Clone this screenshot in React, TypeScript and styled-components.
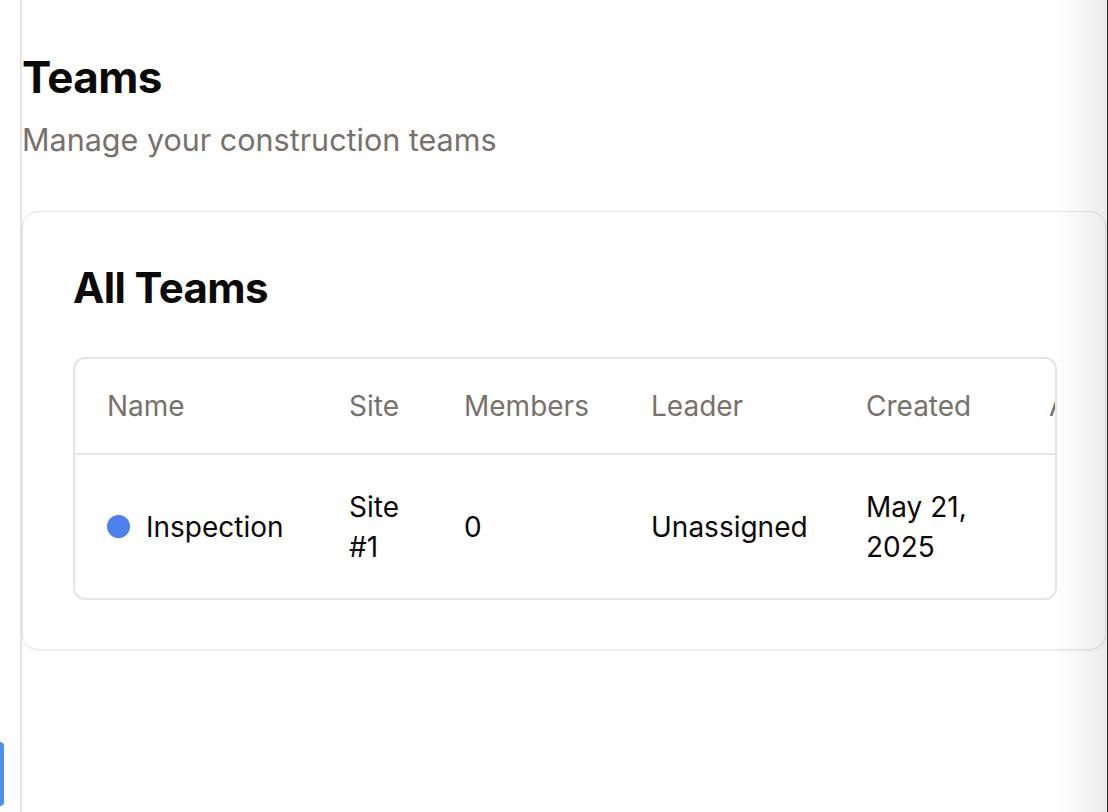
import styled, { createGlobalStyle } from "styled-components";

const GlobalStyle = createGlobalStyle`
  html, body {
    margin: 0;
    padding: 0;
    background: #ffffff;
  }
  body {
    font-family: Inter, "Noto Sans", "Liberation Sans", sans-serif;
    color: #0c0a09;
    overflow: hidden;
  }
  * {
    box-sizing: border-box;
  }
`;

const colours = {
  text: "#0c0a09",
  muted: "#78716c",
  border: "#e5e5e5",
  blue: "#4e80ee",
  tab: "#4a90ec"
};

const Page = styled.div`
  display: flex;
  width: 1108px;
  height: 812px;
  position: relative;
`;

const Sidebar = styled.aside`
  width: 22px;
  flex-shrink: 0;
  border-right: 2px solid ${colours.border};
  display: flex;
  flex-direction: column;
  justify-content: flex-end;
  padding-bottom: 6px;
`;

const SidebarTab = styled.div`
  width: 4px;
  height: 64px;
  background: ${colours.tab};
  border-radius: 0 5px 5px 0;
`;

const Main = styled.main`
  flex: 1;
  min-width: 0;
  padding: 52px 2px 0 0;
  display: flex;
  flex-direction: column;
`;

const Title = styled.h1`
  margin: 0;
  font-size: 44px;
  line-height: 50px;
  font-weight: 700;
  letter-spacing: -0.015em;
`;

const Subtitle = styled.p`
  margin: 18px 0 0;
  font-size: 30.5px;
  line-height: 40px;
  color: ${colours.muted};
`;

const Card = styled.section`
  margin-top: 51px;
  border: 1px solid ${colours.border};
  border-radius: 16px;
  padding: 51px 48px 49px 50px;
  box-shadow: 0 1px 3px rgba(0, 0, 0, 0.06);
`;

const CardTitle = styled.h2`
  margin: 0;
  font-size: 42px;
  line-height: 50px;
  font-weight: 700;
  letter-spacing: -0.015em;
`;

const TableWrap = styled.div`
  margin-top: 44px;
  border: 2px solid ${colours.border};
  border-radius: 12px;
  overflow: hidden;
`;

const Table = styled.table`
  border-collapse: collapse;
  table-layout: fixed;
  width: 1200px;
  font-size: 28px;
`;

const HeadCell = styled.th<{ $width: number }>`
  width: ${(p) => p.$width}px;
  height: 95px;
  padding: 0 0 0 32px;
  text-align: left;
  font-weight: 400;
  color: ${colours.muted};
  border-bottom: 2px solid ${colours.border};
  white-space: nowrap;
`;

const Cell = styled.td`
  height: 144px;
  padding: 0 0 0 32px;
  line-height: 40px;
  color: ${colours.text};
  vertical-align: middle;
`;

const NameCell = styled.div`
  display: flex;
  align-items: center;
  gap: 16px;
  white-space: nowrap;
`;

const Dot = styled.span<{ $colour: string }>`
  width: 23px;
  height: 23px;
  border-radius: 50%;
  background: ${(p) => p.$colour};
  flex-shrink: 0;
`;

const EdgeShade = styled.div`
  position: absolute;
  top: 0;
  right: 0;
  width: 56px;
  height: 100%;
  pointer-events: none;
  background: linear-gradient(
    to right,
    rgba(0, 0, 0, 0),
    rgba(0, 0, 0, 0.03) 50%,
    rgba(0, 0, 0, 0.08)
  );
  border-right: 1px solid #2a2a2a;
`;

const columns = [
  { label: "Name", width: 242 },
  { label: "Site", width: 115 },
  { label: "Members", width: 187 },
  { label: "Leader", width: 215 },
  { label: "Created", width: 183 },
  { label: "Actions", width: 258 }
];

const teams = [
  {
    name: "Inspection",
    colour: colours.blue,
    site: ["Site", "#1"],
    members: 0,
    leader: "Unassigned",
    created: ["May 21,", "2025"]
  }
];

export default function App() {
  return (
    <>
      <GlobalStyle />
      <Page>
        <Sidebar>
          <SidebarTab />
        </Sidebar>
        <Main>
          <Title>Teams</Title>
          <Subtitle>Manage your construction teams</Subtitle>
          <Card>
            <CardTitle>All Teams</CardTitle>
            <TableWrap>
              <Table>
                <thead>
                  <tr>
                    {columns.map((c) => (
                      <HeadCell key={c.label} $width={c.width}>
                        {c.label}
                      </HeadCell>
                    ))}
                  </tr>
                </thead>
                <tbody>
                  {teams.map((team) => (
                    <tr key={team.name}>
                      <Cell>
                        <NameCell>
                          <Dot $colour={team.colour} />
                          {team.name}
                        </NameCell>
                      </Cell>
                      <Cell>
                        {team.site[0]}
                        <br />
                        {team.site[1]}
                      </Cell>
                      <Cell>{team.members}</Cell>
                      <Cell>{team.leader}</Cell>
                      <Cell>
                        {team.created[0]}
                        <br />
                        {team.created[1]}
                      </Cell>
                      <Cell />
                    </tr>
                  ))}
                </tbody>
              </Table>
            </TableWrap>
          </Card>
        </Main>
        <EdgeShade />
      </Page>
    </>
  );
}
